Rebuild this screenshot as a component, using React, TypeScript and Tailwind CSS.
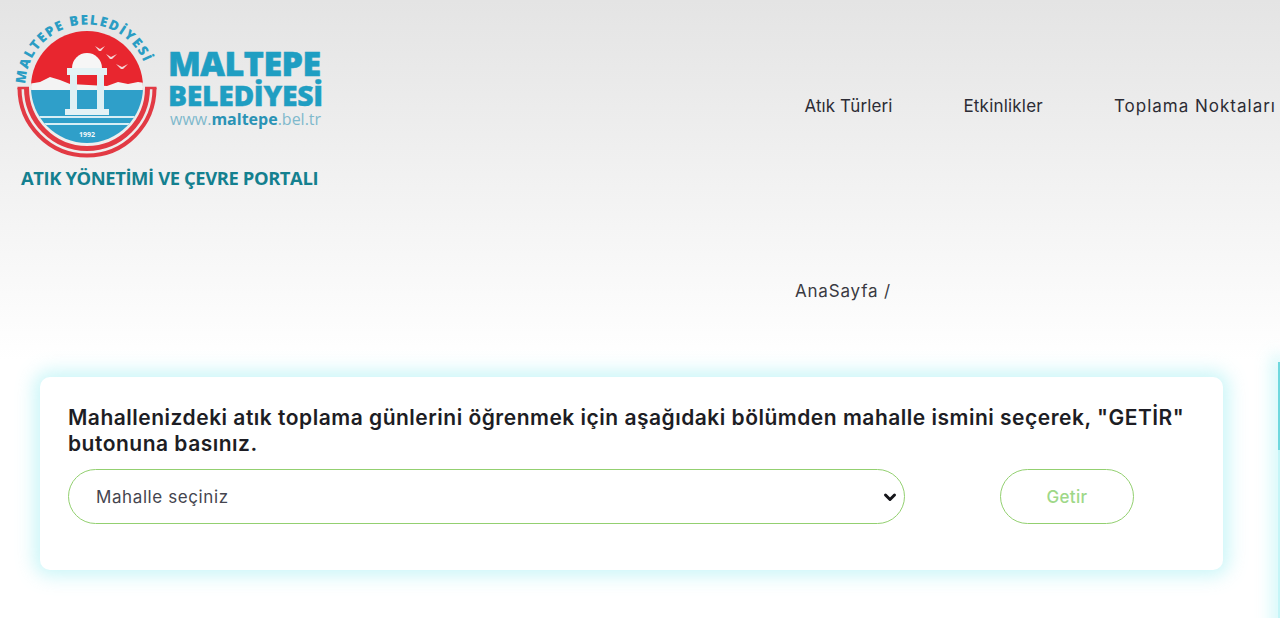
const navItems = [
  { label: "Atık Türleri", className: "tracking-[0.1px]" },
  { label: "Etkinlikler", className: "tracking-[0.2px]" },
  { label: "Toplama Noktaları", className: "tracking-[1px]" },
];

function Logo() {
  return (
    <svg width="150" height="150" viewBox="0 0 150 150" className="block shrink-0">
      <defs>
        <path id="ringText" d="M 13.5 74 A 61.5 61.5 0 0 1 136.5 74" />
        <clipPath id="disc">
          <circle cx="75" cy="75" r="56" />
        </clipPath>
      </defs>
      <text fontFamily="Open Sans" fontSize="13.5" fontWeight="800" fill="#2a9dc4" letterSpacing="1.5">
        <textPath href="#ringText" startOffset="1%">MALTEPE BELEDİYESİ</textPath>
      </text>
      <g clipPath="url(#disc)">
        <rect x="0" y="0" width="150" height="80" fill="#e8262f" />
        <path d="M15 72 L28 70 L38 65 L48 68 L58 72 L95 74 L106 70 L116 72 L126 70 L140 72 V82 H15 Z" fill="#f3f3f3" />
        <rect x="0" y="78" width="150" height="72" fill="#2f9fc9" />
        <rect x="0" y="104" width="150" height="2" fill="#d8eef5" />
        <rect x="0" y="111" width="150" height="2" fill="#d8eef5" />
      </g>
      <path d="M7.5 76 A 67.5 67.5 0 0 0 142.5 76" fill="none" stroke="#e23a44" strokeWidth="4" />
      <path d="M14.5 76 A 60.5 60.5 0 0 0 135.5 76" fill="none" stroke="#e23a44" strokeWidth="5" />
      <path d="M5.5 76 H17 M133 76 H144.5" stroke="#e23a44" strokeWidth="2.5" />
      <path d="M60 56 A 15 15 0 0 1 90 56 Z" fill="#f6f6f6" />
      <rect x="55" y="56" width="40" height="7" fill="#e4f2f5" />
      <rect x="58" y="63" width="7" height="34" fill="#dff0f4" />
      <rect x="85" y="63" width="7" height="34" fill="#dff0f4" />
      <rect x="53" y="97" width="44" height="6" fill="#e4f2f5" />
      <path d="M83 34 l5 3 l5 -3 l-4 5 h-2 Z M94 42 l5 3 l6 -3 l-5 5 h-2 Z M104 52 l6 3 l6 -3 l-5 5 h-2 Z" fill="#f4d7d7" />
      <text x="75" y="125" textAnchor="middle" fontFamily="Open Sans" fontSize="7" fontWeight="700" fill="#f2f8fa">1992</text>
    </svg>
  );
}

export default function App() {
  return (
    <div className="h-[618px] overflow-hidden bg-white font-['Inter',sans-serif]">
      <header className="h-[360px] bg-gradient-to-b from-[#e4e4e4] to-white">
        <div className="flex items-start justify-between pl-[12px] pr-[4px] pt-[12px]">
          <div className="w-[320px]">
            <div className="flex items-start">
              <Logo />
              <div className="ml-[6px] mt-[34px] font-['Open_Sans',sans-serif] text-[#1f9ec2]">
                <div className="text-[34px] leading-[34px] font-extrabold tracking-[-0.5px] [-webkit-text-stroke:0.6px_#1f9ec2]">MALTEPE</div>
                <div className="mt-[2px] text-[28.3px] leading-[27px] font-extrabold tracking-[-0.3px] [-webkit-text-stroke:0.4px_#1f9ec2]">BELEDİYESİ</div>
                <div className="whitespace-nowrap pl-[2px] text-[16px] leading-[20px] text-[#7fb9cc]">
                  www.<span className="font-bold text-[#2a93b5]">maltepe</span>.bel.tr
                </div>
              </div>
            </div>
            <div className="ml-[9px] mt-[2px] whitespace-nowrap font-['Open_Sans',sans-serif] text-[18.4px] font-bold tracking-[-0.4px] text-[#14808f]">
              ATIK YÖNETİMİ VE ÇEVRE PORTALI
            </div>
          </div>
          <nav className="mt-[82px] flex gap-[71px] whitespace-nowrap text-[17px] text-[#2c2c35]">
            {navItems.map((item) => (
              <a key={item.label} className={item.className}>{item.label}</a>
            ))}
          </nav>
        </div>
        <div className="ml-[795px] mt-[87px] text-[17px] tracking-[0.8px] text-[#3a3a42]">AnaSayfa /</div>
      </header>
      <div className="relative flex pl-[40px] pt-[17px]">
        <section className="h-[193px] w-[1183px] rounded-[10px] bg-white px-[28px] pt-[28px] shadow-[0_0_18px_6px_rgba(140,235,240,0.45)]">
          <p className="w-[1125px] text-[21px] leading-[26px] font-semibold tracking-[0.5px] text-[#1d1d24]">
            Mahallenizdeki atık toplama günlerini öğrenmek için aşağıdaki bölümden mahalle ismini seçerek, "GETİR" butonuna basınız.
          </p>
          <div className="mt-[12px] flex items-center">
            <div className="flex h-[55px] w-[837px] items-center justify-between rounded-full border-[1.5px] border-[#93d070] pl-[27px] pr-[6px] pt-[3px] text-[17px] tracking-[0.6px] text-[#45454f]">
              <span>Mahalle seçiniz</span>
              <svg width="16" height="16" viewBox="0 0 16 16" fill="none" stroke="#15151a" strokeWidth="3" strokeLinecap="round" strokeLinejoin="round" className="-mt-[3px]">
                <path d="M3.5 6 L8 10.5 L12.5 6" />
              </svg>
            </div>
            <button className="ml-[95px] h-[55px] w-[134px] rounded-full border-[1.5px] border-[#93d070] pt-[3px] text-[17px] font-medium tracking-[0.3px] text-[#9ed888]">
              Getir
            </button>
          </div>
        </section>
        <div className="absolute right-0 top-[2px] h-[300px] w-[2px] bg-[#c5f5f7] shadow-[0_0_16px_6px_rgba(140,235,240,0.42)]">
          <div className="h-[88px] w-[2px] bg-[#6fd8de]" />
        </div>
      </div>
    </div>
  );
}
